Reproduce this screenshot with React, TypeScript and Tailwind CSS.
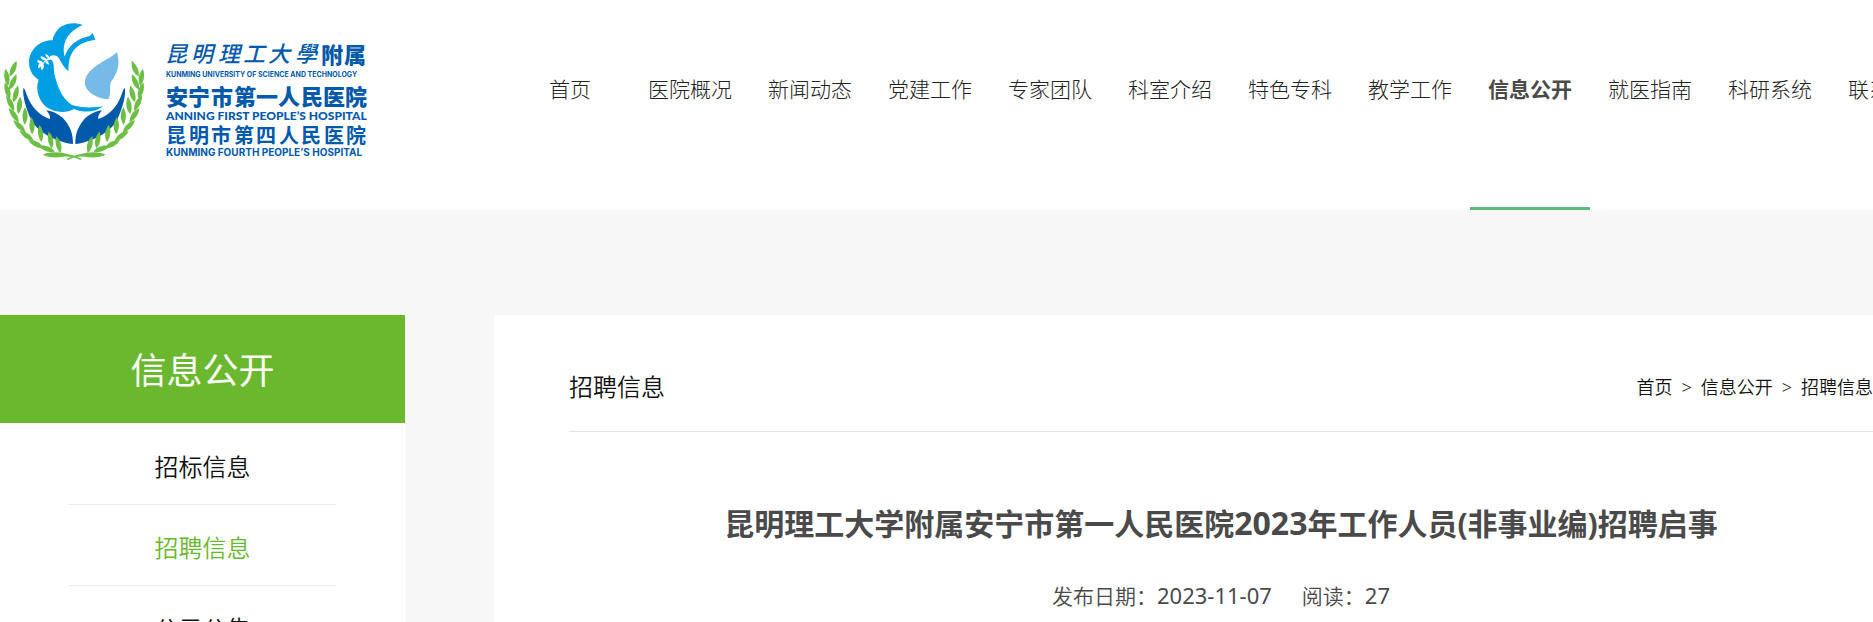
const navItems = [
  '首页',
  '医院概况',
  '新闻动态',
  '党建工作',
  '专家团队',
  '科室介绍',
  '特色专科',
  '教学工作',
  '信息公开',
  '就医指南',
  '科研系统',
  '联系我们',
]

const sideItems = ['招标信息', '招聘信息', '公示公告']

// x, y, rotation of each leaf on the left branch
const leaves = [
  [39, 208, 22],
  [38, 248, 24],
  [21, 234, -10],
  [47, 284, 14],
  [23, 274, -18],
  [58, 318, 6],
  [32, 311, -28],
  [75, 350, 0],
  [43, 347, -36],
  [96, 379, -4],
  [60, 380, -46],
  [122, 402, -8],
  [82, 409, -56],
  [152, 422, -12],
  [110, 433, -64],
  [176, 436, -16],
  [142, 447, -72],
]

function Branch() {
  return (
    <g fill="#6cbe45">
      {leaves.map(([x, y, r]) => (
        <path
          key={`${x}-${y}`}
          d="M0 -28 C11 -10 10 9 -1 24 C-10 9 -10 -10 0 -28Z"
          transform={`translate(${x} ${y}) rotate(${r})`}
        />
      ))}
      <path d="M128 464 C150 454 180 456 206 463 C222 467 236 472 246 477 L241 480 C224 470 206 468 190 470 C168 474 146 473 128 464Z" />
    </g>
  )
}

function Hand() {
  return (
    <path
      fill="#0059ab"
      d="M70 265 C74 264 76 274 81 286 C94 321 118 347 150 357 C152 347 145 339 139 331 C162 335 181 345 194 360 C212 382 219 402 219 432 C178 427 114 402 92 356 C78 326 67 288 70 265Z"
    />
  )
}

function Logo() {
  return (
    <svg viewBox="0 0 380 210" className="w-[380px] h-[210px]" role="img" aria-label="安宁市第一人民医院">
      <g transform="scale(0.3333)">
        <path
          fill="#009fe3"
          d="M248 75 C222 64 184 69 168 96 C161 107 158 114 158 121 C122 119 88 148 87 186 C87 210 98 229 116 239 C104 270 118 308 145 325 C170 340 202 338 222 327 C250 339 288 338 309 319 C280 324 242 324 216 315 C186 297 172 258 164 226 C160 208 165 194 155 180 L148 173 C150 164 168 163 175 172 C183 184 190 204 206 213 C203 164 226 130 272 122 L286 119 L278 99 L269 108 C230 116 204 138 194 170 C184 128 204 95 248 75Z"
        />
        {/* olive twig */}
        <path
          fill="#fff"
          d="M115 205 C112 196 117 190 122 190 C113 191 111 183 112 181 C119 180 126 183 129 188 L136 181 C126 180 123 174 121 170 C129 168 137 173 139 178 L144 174 C137 170 136 166 136 163 C142 163 147 168 149 174 L157 177 L140 182 C147 184 147 190 146 194 C139 192 135 188 137 184 L130 191 C134 198 131 204 126 211 C121 206 123 196 126 193 C124 199 120 204 115 205Z"
        />
        <path
          fill="#76bae8"
          d="M351 156 C331 179 262 198 255 243 C251 274 289 295 325 298 C336 276 326 258 334 244 C352 220 362 193 351 156Z"
        />
        <Hand />
        <Branch />
        <g transform="translate(445 0) scale(-1 1)">
          <Hand />
          <Branch />
        </g>
      </g>
      <g fill="#0059ab" className="font-['Noto_Sans_CJK_SC',sans-serif] font-bold">
        <text x="165 191 218 243 268 295" y="62" className="text-[22px] font-medium italic">昆明理工大學</text>
        <text x="321 344" y="63" className="text-[22px] font-black">附属</text>
        <text x="166 188 211 234 256 278 301 323 345" y="105" className="text-[22px] font-black">安宁市第一人民医院</text>
        <text x="166 189 211 234 256 279 301 324 346" y="143" className="text-[20px]">昆明市第四人民医院</text>
      </g>
      <g fill="#0059ab" className="font-['Inter',sans-serif] font-bold">
        <text x="166" y="77" className="text-[7px]">KUNMING UNIVERSITY OF SCIENCE AND TECHNOLOGY</text>
        <text x="166" y="120" className="font-['Lato',sans-serif] text-[12px] font-black">ANNING FIRST PEOPLE’S HOSPITAL</text>
        <text x="166" y="156" className="text-[10px]">KUNMING FOURTH PEOPLE’S HOSPITAL</text>
      </g>
    </svg>
  )
}

export default function App() {
  return (
    <div className="min-h-screen overflow-hidden bg-[#f7f7f7] font-['Noto_Sans','Noto_Sans_CJK_SC',sans-serif] text-[#111]">
      {/* Header */}
      <header className="flex h-[210px] overflow-hidden bg-white">
        <a href="#home" className="w-[510px] shrink-0">
          <Logo />
        </a>
        <nav className="flex shrink-0">
          {navItems.map((item) => (
            <a
              key={item}
              href={`#${item}`}
              className={
                item === '信息公开'
                  ? 'w-[120px] border-b-3 border-[#5cba7d] text-center text-[21px] leading-[178px] font-bold text-[#4a4a4a]'
                  : 'w-[120px] text-center text-[21px] leading-[178px] font-light text-[#222]'
              }
            >
              {item}
            </a>
          ))}
        </nav>
      </header>

      <div className="mt-[105px] flex items-start">
        {/* Sidebar */}
        <aside className="w-[405px] shrink-0 bg-white">
          <h2 className="bg-[#6ab82d] pt-[4px] text-center text-[36px] leading-[104px] text-white">信息公开</h2>
          <ul className="px-[68px] pt-px">
            {sideItems.map((item) => (
              <li key={item} className="border-b border-[#eee]">
                <a
                  href={`#${item}`}
                  className={
                    item === '招聘信息'
                      ? 'block pt-[6px] text-center text-[24px] leading-[74px] font-[350] text-[#6ab82d]'
                      : 'block pt-[6px] text-center text-[24px] leading-[74px] font-[350]'
                  }
                >
                  {item}
                </a>
              </li>
            ))}
          </ul>
        </aside>

        {/* Article */}
        <main className="ml-[89px] flex-1 self-stretch bg-white pl-[75px]">
          <div className="flex items-center justify-between border-b border-[#e5e5e5] pt-[28px]">
            <h3 className="text-[24px] leading-[88px] font-[350]">招聘信息</h3>
            <div className="flex gap-[9px] text-[18px] font-[350]">
              <a href="#home">首页</a>
              <span>&gt;</span>
              <a href="#info">信息公开</a>
              <span>&gt;</span>
              <a href="#jobs">招聘信息</a>
            </div>
          </div>
          <h1 className="pt-[67px] text-center text-[30px] leading-[48px] font-bold text-[#4a4a4a]">
            昆明理工大学附属安宁市第一人民医院<span className="text-[32px]">2023</span>年工作人员(非事业编)招聘启事
          </h1>
          <div className="flex justify-center gap-[30px] pt-[31px] text-[21px] leading-[32px] font-[350] text-[#4a4a4a]">
            <span>
              发布日期：<time className="text-[22px] font-normal">2023-11-07</time>
            </span>
            <span>
              阅读：<span className="text-[22px] font-normal">27</span>
            </span>
          </div>
        </main>
      </div>
    </div>
  )
}
